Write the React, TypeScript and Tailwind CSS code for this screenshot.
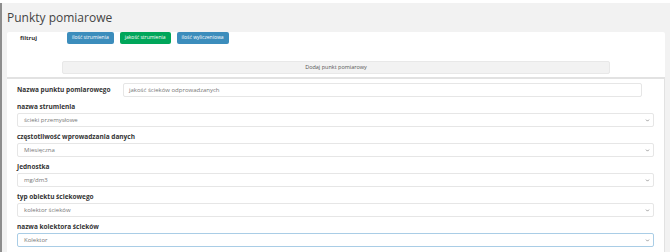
import { ChevronDown } from 'lucide-react';

const font = { fontFamily: '"Open Sans", "Noto Sans", sans-serif' };

const fields = [
  { label: 'nazwa strumienia', value: 'ścieki przemysłowe' },
  { label: 'częstotliwość wprowadzania danych', value: 'Miesięczna' },
  { label: 'Jednostka', value: 'mg/dm3' },
  { label: 'typ obiektu ściekowego', value: 'kolektor ścieków' },
  { label: 'nazwa kolektora ścieków', value: 'Kolektor', focused: true },
];

function FilterButton({ label, green }: { label: string; green?: boolean }) {
  return (
    <button
      className={`flex h-[12px] items-center rounded-[2px] px-[5px] text-[5px] text-white ${
        green ? 'bg-[#00a65a]' : 'bg-[#3c8dbc]'
      }`}
    >
      {label}
    </button>
  );
}

function SelectField({ value, focused }: { value: string; focused?: boolean }) {
  return (
    <div
      className={`flex h-[14px] items-center justify-between rounded-[2px] border bg-white pl-[6px] pr-[3px] text-[6px] text-[#777] ${
        focused ? 'border-[#a9cde6]' : 'border-[#e6e6e6]'
      }`}
    >
      <span>{value}</span>
      <ChevronDown className="h-[5px] w-[5px] text-[#666]" strokeWidth={3} />
    </div>
  );
}

export default function App() {
  return (
    <div className="h-[252px] w-[670px] overflow-hidden bg-white pt-[3px]" style={font}>
      <div className="h-full border-l-2 border-[#8d8d8d] bg-[#f2f2f2] pl-[5px] pr-[5px]">
        <h1 className="flex h-[29px] items-center text-[12px] text-[#444]">Punkty pomiarowe</h1>

        <div className="h-[45px] rounded-t-[2px] bg-white">
          <div className="flex items-start">
            <span className="w-[60px] pl-[13px] pt-[2px] text-[6px] font-bold text-[#333]">filtruj</span>
            <div className="flex gap-[6px]">
              <FilterButton label="ilość strumienia" />
              <FilterButton label="jakość strumienia" green />
              <FilterButton label="ilość wyliczeniowa" />
            </div>
          </div>
          <div className="ml-[55px] mt-[17px] flex h-[13px] w-[548px] items-center justify-center rounded-[2px] border border-[#e8e8e8] bg-[#f2f2f2] text-[5.5px] text-[#555]">
            Dodaj punkt pomiarowy
          </div>
        </div>

        <div className="h-full border-r border-t-2 border-[#e2e2e2] bg-white px-[10px] pt-[4px]">
          <div className="flex items-center">
            <span className="w-[106px] text-[6.5px] font-bold text-[#333]">Nazwa punktu pomiarowego</span>
            <div className="flex h-[14px] w-[519px] items-center rounded-[2px] border border-[#e6e6e6] pl-[5px] text-[6px] text-[#777]">
              jakość ścieków odprowadzanych
            </div>
          </div>
          {fields.map((f) => (
            <div key={f.label} className="mt-[5px]">
              <div className="mb-[1px] flex h-[10px] items-center text-[6.5px] font-bold text-[#333]">
                {f.label}
              </div>
              <SelectField value={f.value} focused={f.focused} />
            </div>
          ))}
        </div>
      </div>
    </div>
  );
}
